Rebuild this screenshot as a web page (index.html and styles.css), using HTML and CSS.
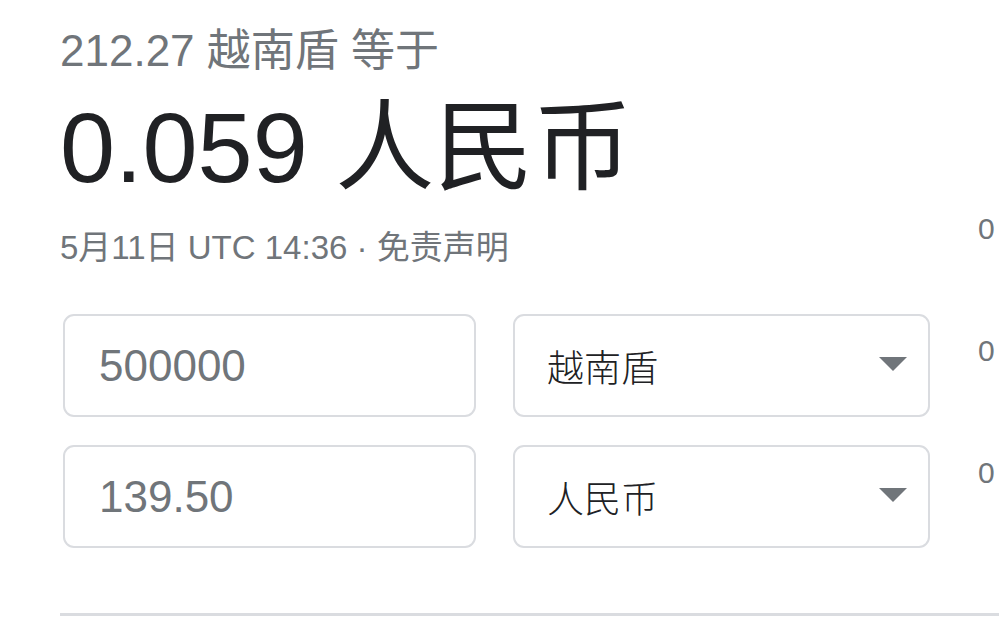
FILE: index.html
```html
<!DOCTYPE html>
<html lang="zh-CN">
<head>
<meta charset="utf-8">
<title>货币换算</title>
<link rel="stylesheet" href="styles.css">
</head>
<body>
<div class="page">
  <div class="main">
    <div class="converter">
      <div class="equiv">212.27 越南盾 等于</div>
      <div class="result">0.059 人民币</div>
      <div class="meta">5月11日 UTC 14:36 · 免责声明</div>
      <div class="rows">
        <div class="row">
          <input class="amount" type="text" value="500000" aria-label="金额">
          <div class="select" role="listbox" aria-label="货币">
            <span class="select-label">越南盾</span>
            <span class="caret"></span>
          </div>
        </div>
        <div class="row">
          <input class="amount" type="text" value="139.50" aria-label="金额">
          <div class="select" role="listbox" aria-label="货币">
            <span class="select-label">人民币</span>
            <span class="caret"></span>
          </div>
        </div>
      </div>
    </div>
    <div class="axis">
      <span class="tick">0</span>
      <span class="tick">0</span>
      <span class="tick">0</span>
    </div>
  </div>
  <div class="divider"></div>
</div>
</body>
</html>
```

FILE: styles.css
```css
html, body {
  margin: 0;
  padding: 0;
  background: #ffffff;
  overflow: hidden;
}

body {
  font-family: "Liberation Sans", Arial, "Noto Sans CJK SC", sans-serif;
  width: 999px;
  height: 641px;
}

.page {
  padding-left: 60px;
}

.main {
  display: flex;
  align-items: flex-start;
}

.converter {
  width: 870px;
  display: flex;
  flex-direction: column;
}

.equiv {
  margin-top: 25px;
  font-size: 44px;
  line-height: 52px;
  color: #70757a;
  white-space: nowrap;
}

.result {
  margin-top: 16px;
  font-size: 99px;
  line-height: 110px;
  color: #202124;
  white-space: nowrap;
}

.meta {
  margin-top: 25px;
  font-size: 33px;
  line-height: 40px;
  color: #70757a;
  white-space: nowrap;
}

.rows {
  margin-top: 46px;
  margin-left: 3px;
  display: flex;
  flex-direction: column;
  gap: 28px;
}

.row {
  display: flex;
  gap: 37px;
}

.amount {
  box-sizing: border-box;
  width: 413px;
  height: 103px;
  margin: 0;
  padding: 0 32px 0 34px;
  border: 2px solid #dadce0;
  border-radius: 11px;
  background: #ffffff;
  font-family: "Liberation Sans", Arial, sans-serif;
  font-size: 44px;
  color: #70757a;
  outline: none;
}

.select {
  box-sizing: border-box;
  width: 417px;
  height: 103px;
  padding: 0 21px 0 32px;
  border: 2px solid #dadce0;
  border-radius: 11px;
  display: flex;
  align-items: center;
  justify-content: space-between;
}

.select-label {
  font-family: "Noto Sans CJK SC", "Liberation Sans", sans-serif;
  font-size: 37px;
  font-weight: 300;
  color: #202124;
}

.caret {
  width: 0;
  height: 0;
  margin-top: -3px;
  border-left: 14px solid transparent;
  border-right: 14px solid transparent;
  border-top: 14px solid #70757a;
}

.axis {
  margin-left: 48px;
  padding-top: 212px;
  display: flex;
  flex-direction: column;
  gap: 88px;
}

.tick {
  font-size: 30px;
  line-height: 34px;
  color: #70757a;
  white-space: nowrap;
}

.divider {
  margin-top: 65px;
  height: 3px;
  background: #dadce0;
}
```
